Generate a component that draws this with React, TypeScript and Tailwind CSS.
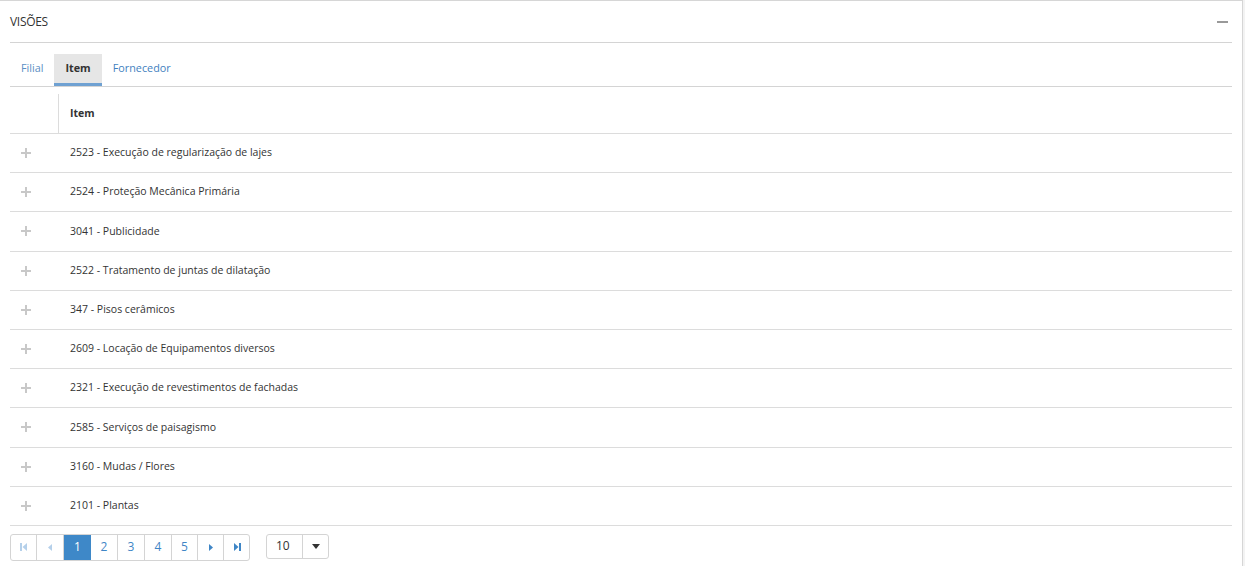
import * as React from "react";

const rows = [
  "2523 - Execução de regularização de lajes",
  "2524 - Proteção Mecânica Primária",
  "3041 - Publicidade",
  "2522 - Tratamento de juntas de dilatação",
  "347 - Pisos cerâmicos",
  "2609 - Locação de Equipamentos diversos",
  "2321 - Execução de revestimentos de fachadas",
  "2585 - Serviços de paisagismo",
  "3160 - Mudas / Flores",
  "2101 - Plantas",
];

const PlusIcon = () => (
  <svg width="10" height="10" viewBox="0 0 10 10" className="text-[#c8c8c8]">
    <rect x="4" y="0" width="2" height="10" fill="currentColor" />
    <rect x="0" y="4" width="10" height="2" fill="currentColor" />
  </svg>
);

const FirstIcon = ({ color }: { color: string }) => (
  <svg width="8" height="8" viewBox="0 0 8 8">
    <rect x="0" y="0" width="2" height="8" fill={color} />
    <path d="M7 0 L2.5 4 L7 8 Z" fill={color} />
  </svg>
);
const PrevIcon = ({ color }: { color: string }) => (
  <svg width="4" height="7" viewBox="0 0 4 7">
    <path d="M4 0 L0 3.5 L4 7 Z" fill={color} />
  </svg>
);
const NextIcon = ({ color }: { color: string }) => (
  <svg width="4" height="7" viewBox="0 0 4 7">
    <path d="M0 0 L4 3.5 L0 7 Z" fill={color} />
  </svg>
);
const LastIcon = ({ color }: { color: string }) => (
  <svg width="8" height="8" viewBox="0 0 8 8">
    <path d="M1 0 L5.5 4 L1 8 Z" fill={color} />
    <rect x="6" y="0" width="2" height="8" fill={color} />
  </svg>
);

export default function App() {
  return (
    <div
      className="w-[1245px] h-[566px] bg-[#f3f3f3] overflow-hidden text-[#333]"
      style={{ fontFamily: '"Open Sans", "Noto Sans", sans-serif' }}
    >
      <div className="w-[1243px] h-[566px] bg-white border-t border-r border-[#d6d6d6] px-[10px]">
        {/* Header */}
        <div className="h-[42px] flex items-center justify-between border-b border-[#d4d4d4]">
          <span className="text-[12px] leading-none tracking-[-0.3px]">VISÕES</span>
          <span className="w-[11px] h-[2px] bg-[#999] mr-[4px]" />
        </div>

        {/* Tabs */}
        <div className="h-[44px] flex items-end border-b border-[#d4d4d4]">
          <div className="flex h-[32px] text-[10.8px]">
            <div className="px-[11px] flex items-center text-[#5b8fc4] pb-[4px]">Filial</div>
            <div className="px-[11px] flex items-center bg-[#e6e6e6] font-bold text-[#333] border-b-[3px] border-[#6fa1d2] pb-[1px]">
              Item
            </div>
            <div className="px-[11px] flex items-center text-[#3f7fc0] pb-[4px]">Fornecedor</div>
          </div>
        </div>

        {/* Table header */}
        <div className="h-[47px] flex border-b border-[#dcdcdc]">
          <div className="w-[48px] flex-none" />
          <div className="mt-[7px] border-l border-[#dcdcdc] pl-[11px] flex items-center text-[10.5px] font-bold">
            Item
          </div>
        </div>

        {/* Rows */}
        {rows.map((r) => (
          <div
            key={r}
            className="h-[39.2px] flex items-center border-b border-[#dcdcdc] text-[10.5px]"
          >
            <div className="w-[60px] flex-none flex items-center pl-[11px]">
              <PlusIcon />
            </div>
            <span>{r}</span>
          </div>
        ))}

        {/* Pagination */}
        <div className="flex items-start mt-[8px]">
          <div className="flex h-[27px] border border-[#d4d4d4] rounded-[3px] overflow-hidden text-[12px]">
            <div className="w-[26px] flex items-center justify-center border-r border-[#d4d4d4]">
              <FirstIcon color="#b5d0ea" />
            </div>
            <div className="w-[27px] flex items-center justify-center border-r border-[#d4d4d4]">
              <PrevIcon color="#b5d0ea" />
            </div>
            <div className="w-[27px] flex items-center justify-center bg-[#3e88c8] text-white">1</div>
            {["2", "3", "4"].map((p) => (
              <div
                key={p}
                className="w-[27px] flex items-center justify-center border-r border-[#d4d4d4] text-[#3f86c6]"
              >
                {p}
              </div>
            ))}
            <div className="w-[26px] flex items-center justify-center border-r border-[#d4d4d4] text-[#3f86c6]">
              5
            </div>
            <div className="w-[26px] flex items-center justify-center border-r border-[#d4d4d4]">
              <NextIcon color="#3f86c6" />
            </div>
            <div className="w-[25px] flex items-center justify-center">
              <LastIcon color="#3f86c6" />
            </div>
          </div>
          <div className="ml-[16px] flex h-[25px] border border-[#d4d4d4] rounded-[3px] text-[12px]">
            <div className="w-[36px] flex items-center pl-[9px] border-r border-[#d4d4d4]">10</div>
            <div className="w-[25px] flex items-center justify-center">
              <svg width="8" height="5" viewBox="0 0 8 5">
                <path d="M0 0 L8 0 L4 5 Z" fill="#333" />
              </svg>
            </div>
          </div>
        </div>
      </div>
    </div>
  );
}
